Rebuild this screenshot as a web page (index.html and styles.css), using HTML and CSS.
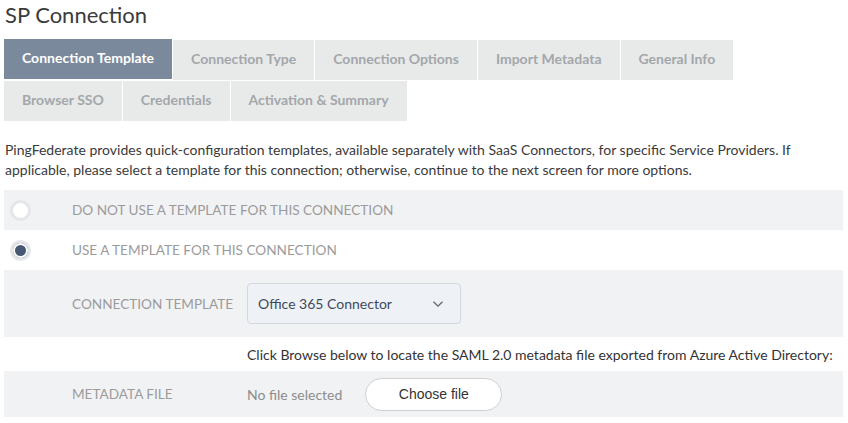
FILE: index.html
```html
<!DOCTYPE html>
<html lang="en">

<head>
    <meta charset="UTF-8">
    <meta name="viewport" content="width=device-width, initial-scale=1.0">
    <title>SP Connection</title>
    <link rel="stylesheet" href="styles.css">
</head>

<body>
    <div class="page">
        <h1 class="title">SP Connection</h1>

        <nav class="tabs">
            <a href="#" class="tab active">Connection Template</a>
            <a href="#" class="tab">Connection Type</a>
            <a href="#" class="tab">Connection Options</a>
            <a href="#" class="tab">Import Metadata</a>
            <a href="#" class="tab">General Info</a>
            <a href="#" class="tab">Browser SSO</a>
            <a href="#" class="tab">Credentials</a>
            <a href="#" class="tab">Activation &amp; Summary</a>
        </nav>

        <p class="intro">PingFederate provides quick-configuration templates, available separately with SaaS Connectors, for specific Service Providers. If applicable, please select a template for this connection; otherwise, continue to the next screen for more options.</p>

        <div class="form">
            <label class="row radio-row shaded">
                <span class="radio"></span>
                <span class="radio-label">Do not use a template for this connection</span>
            </label>
            <label class="row radio-row">
                <span class="radio checked"></span>
                <span class="radio-label">Use a template for this connection</span>
            </label>

            <div class="row field-row shaded tall">
                <span class="field-label">Connection Template</span>
                <div class="select">
                    <span>Office 365 Connector</span>
                    <svg width="12" height="8" viewBox="0 0 12 8"><path d="M1.5 1.8 6 6.2 10.5 1.8" fill="none" stroke="#5b6675" stroke-width="1.3"/></svg>
                </div>
            </div>

            <div class="row note-row">
                <span class="note">Click Browse below to locate the SAML 2.0 metadata file exported from Azure Active Directory:</span>
            </div>

            <div class="row field-row shaded">
                <span class="field-label">Metadata File</span>
                <div class="file">
                    <span class="file-name">No file selected</span>
                    <button class="file-btn">Choose file</button>
                </div>
            </div>
        </div>
    </div>
</body>
</html>
```

FILE: styles.css
```css
body {
    margin: 0;
    background-color: #ffffff;
    font-family: Lato, "Open Sans", sans-serif;
    color: #333333;
}

.page {
    padding: 0 5px 0 4px;
}

.title {
    margin: 0;
    padding: 2px 0 0 1px;
    height: 37px;
    font-size: 22px;
    font-weight: 400;
    color: #3b3b3b;
    line-height: 26px;
}

.tabs {
    display: flex;
    flex-wrap: wrap;
    column-gap: 1px;
    width: 760px;
}

.tab {
    box-sizing: border-box;
    display: flex;
    align-items: center;
    height: 40px;
    margin-top: 1px;
    padding: 0 18px 3px;
    background-color: #e8eaea;
    color: #a3a7aa;
    font-size: 14px;
    font-weight: 700;
    text-decoration: none;
}

.tab.active {
    margin-top: 0;
    margin-bottom: 1px;
    background-color: #7a899c;
    color: #ffffff;
}

.intro {
    margin: 19px 0 10px 1px;
    font-size: 14px;
    line-height: 20px;
    color: #3a3a3a;
}

.form {
    display: flex;
    flex-direction: column;
}

.row {
    display: grid;
    grid-template-columns: 68px 175px 1fr;
    align-items: center;
}

.shaded {
    background-color: #f1f2f4;
}

.radio-row {
    height: 40px;
}

.radio {
    box-sizing: border-box;
    width: 21px;
    height: 21px;
    margin-left: 6px;
    border: 3px solid #e4e6e9;
    border-radius: 50%;
    background-color: #ffffff;
}

.radio.checked {
    background-color: #465872;
    box-shadow: inset 0 0 0 2px #ffffff;
}

.radio-label,
.field-label {
    font-size: 13.6px;
    text-transform: uppercase;
    color: #9b9b9b;
}

.radio-row .radio-label {
    grid-column: 2 / 4;
}

.field-row {
    height: 46px;
}

.field-row.tall {
    height: 67px;
}

.field-row .field-label {
    grid-column: 1 / 3;
    padding-left: 68px;
}

.select {
    box-sizing: border-box;
    display: flex;
    align-items: center;
    justify-content: space-between;
    width: 214px;
    height: 41px;
    padding: 0 16px 0 10px;
    border: 1px solid #d3d8de;
    border-radius: 4px;
    background-color: #eef2f6;
    font-size: 14px;
    color: #3e4a5b;
}

.note-row {
    height: 34px;
}

.note {
    grid-column: 3;
    font-size: 14px;
    color: #333333;
}

.file {
    display: flex;
    align-items: center;
    gap: 23px;
}

.file-name {
    font-size: 14px;
    color: #8c8c8c;
}

.file-btn {
    width: 137px;
    height: 33px;
    border: 1px solid #cfcfcf;
    border-radius: 17px;
    background-color: #ffffff;
    font-family: "Liberation Sans", Arial, sans-serif;
    font-size: 14px;
    color: #333333;
}
```
